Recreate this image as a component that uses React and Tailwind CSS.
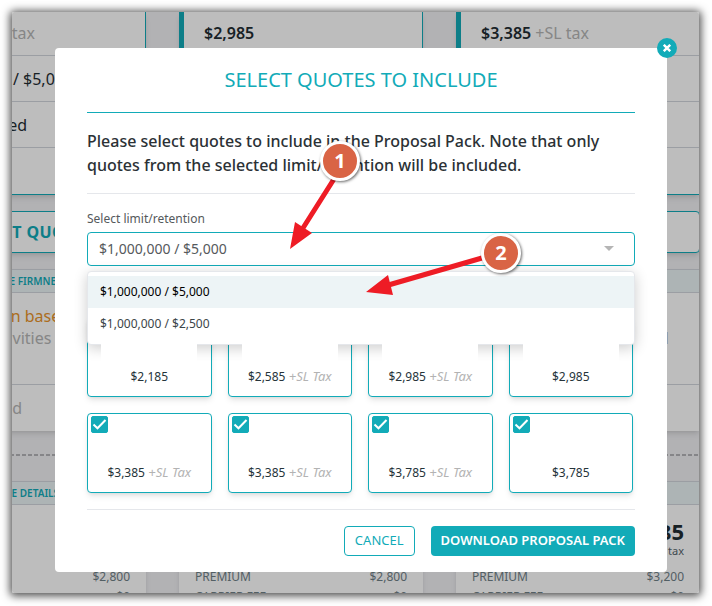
import { useState } from "react";

const LIMITS = ["$1,000,000 / $5,000", "$1,000,000 / $2,500"];

const QUOTES = [
  { id: 1, price: "$2,185" },
  { id: 2, price: "$2,585", tax: true },
  { id: 3, price: "$2,985", tax: true },
  { id: 4, price: "$2,985" },
  { id: 5, price: "$3,385", tax: true },
  { id: 6, price: "$3,385", tax: true },
  { id: 7, price: "$3,785", tax: true },
  { id: 8, price: "$3,785" },
];

const COLUMNS = [
  { price: "$2,585", tax: true, limit: "$1,000,000 / $5,000", status: "Not admitted", premium: "$2,800" },
  { price: "$2,985", tax: false, limit: "$1,000,000 / $5,000", status: "Not admitted", premium: "$2,800" },
  { price: "$3,385", tax: true, limit: "$1,000,000 / $5,000", status: "Not admitted", premium: "$3,200" },
];

function CarrierColumn({ price, tax, limit, status }) {
  return (
    <section className="min-w-0">
      <div className="border-r border-b border-l-5 border-[#12abb8] bg-white text-base text-[#1f2d33] shadow-md">
        <div className="flex h-11 items-center gap-1 border-b border-gray-300 pb-0.5 pl-5">
          <strong className="font-semibold">{price}</strong>
          {tax && <span className="text-[#b5b5b5]">+SL tax</span>}
        </div>
        <div className="flex h-[46px] items-center border-b border-gray-300 pl-5">{limit}</div>
        <div className="flex h-[46px] items-center border-b border-gray-300 pl-5">{status}</div>
        <div className="h-[46px]" />
      </div>
      <button
        type="button"
        className="mt-4 h-[42px] w-full rounded border border-[#12abb8] bg-white text-base font-bold tracking-wide text-[#12abb8] shadow-md"
      >
        SELECT QUOTE
      </button>
      <div className="mt-4 bg-white text-center shadow-md">
        <h3 className="flex h-6 items-center justify-center border-y border-gray-300 bg-[#eaf3f5] text-[10px] font-semibold text-[#12abb8]">
          QUOTE FIRMNESS
        </h3>
        <p className="h-[92px] border-b border-gray-300 pt-3 text-base leading-[22px] text-[#b5b5b5]">
          <span className="block pr-2.5 text-[#e8932a]">Quotation based on</span>
          <span className="block whitespace-nowrap">all subjectivities covered</span>
        </p>
        <div className="flex h-[46px] items-center pl-5 text-base text-[#b5b5b5]">{status}</div>
      </div>
    </section>
  );
}

function PriceColumn({ price, premium }) {
  return (
    <section className="min-w-0 bg-white text-[#6f8087] shadow-md">
      <h3 className="flex h-6 items-center justify-center border-y border-gray-300 bg-[#eaf3f5] text-[10px] font-semibold text-[#12abb8]">
        PRICE DETAILS
      </h3>
      <div className="px-4 pt-2.5">
        <p className="text-right text-[22px] leading-8 font-bold text-[#1f2d33]">{price}</p>
        <p className="text-right text-[11px] leading-2 text-[#55646b]">+SL tax</p>
        <dl className="mt-3 text-xs leading-5">
          <div className="flex justify-between">
            <dt>PREMIUM</dt>
            <dd>{premium}</dd>
          </div>
          <div className="flex justify-between">
            <dt>CARRIER FEE</dt>
            <dd>$0</dd>
          </div>
        </dl>
      </div>
    </section>
  );
}

function QuoteCard({ price, tax, checked, onChange }) {
  return (
    <label className="relative flex h-20 flex-col items-center rounded border border-[#12abb8] bg-white text-xs text-[#26343a] shadow-md">
      <input
        type="checkbox"
        checked={checked}
        onChange={onChange}
        className="peer absolute top-0.5 left-[3px] size-[17px] appearance-none rounded-xs border border-[#12abb8] checked:bg-[#12abb8]"
      />
      <svg
        viewBox="0 0 17 17"
        className="pointer-events-none invisible absolute top-0.5 left-[3px] size-[17px] peer-checked:visible"
        fill="none"
        stroke="#fff"
        strokeWidth="2"
      >
        <path d="M2.5 8.5 6.5 12.3 14.5 4" />
      </svg>
      <span className="z-20 mt-[26px] h-5 w-24 bg-white" />
      <span className="mt-[3px] leading-5">
        {price}
        {tax && <em className="text-[13px] leading-none text-[#b3b3b3]"> +SL Tax</em>}
      </span>
    </label>
  );
}

function Marker({ children, className }) {
  return (
    <span
      className={`absolute flex size-10 items-center justify-center rounded-full border-3 border-white bg-[#d96445] text-xl font-bold text-white shadow-[1px_1px_3px_rgba(0,0,0,0.6)] ${className}`}
    >
      {children}
    </span>
  );
}

export default function App() {
  const [limit, setLimit] = useState(LIMITS[0]);
  const [selected, setSelected] = useState(QUOTES.map((q) => q.id));

  const toggle = (id) =>
    setSelected((ids) => (ids.includes(id) ? ids.filter((i) => i !== id) : [...ids, id]));

  return (
    <div className="flex h-screen bg-white pt-3 pr-[13px] pb-[13px] pl-3 font-['Noto_Sans','Open_Sans',sans-serif]">
      <main className="relative min-w-0 flex-1 overflow-hidden rounded-xs bg-[#f0f0f3] shadow-[0_1px_9px_2px_rgba(0,0,0,0.7)]">
        <div className="-mr-px -ml-[110px]">
          <div className="grid grid-cols-3 gap-[33px]">
            {COLUMNS.map((column, i) => (
              <CarrierColumn key={i} {...column} />
            ))}
          </div>
          <hr className="mt-[23px] h-0.5 border-0 bg-[repeating-linear-gradient(90deg,#b4b4b8_0_4px,transparent_4px_6px)]" />
          <div className="mt-[25px] grid grid-cols-3 gap-[33px]">
            {COLUMNS.map((column, i) => (
              <PriceColumn key={i} {...column} />
            ))}
          </div>
        </div>

        <div className="absolute inset-0 flex items-start bg-black/26 pt-9 pr-8 pl-[43px]">
          <div role="dialog" aria-labelledby="dialog-title" className="relative w-full rounded bg-white px-8 pb-4">
            <button
              type="button"
              aria-label="Close"
              className="absolute -top-2.5 -right-2.5 flex size-5 items-center justify-center rounded-full bg-[#12abb8]"
            >
              <svg viewBox="0 0 8 8" className="size-2" stroke="#fff" strokeWidth="2.4">
                <path d="m.8.8 6.4 6.4M7.2.8.8 7.2" />
              </svg>
            </button>

            <h2 id="dialog-title" className="border-b border-[#12abb8] py-4 text-center text-xl leading-8 text-[#12abb8]">
              SELECT QUOTES TO INCLUDE
            </h2>
            <p className="border-b border-gray-200 py-4 text-base leading-6 font-medium text-[#2b3135]">
              Please select quotes to include in the Proposal Pack. Note that only quotes from the selected
              limit/retention will be included.
            </p>

            <div className="relative mt-4">
              <label htmlFor="limit" className="block text-xs leading-[18px] text-[#55595c]">
                Select limit/retention
              </label>
              <select
                id="limit"
                value={limit}
                onChange={(e) => setLimit(e.target.value)}
                className="mt-1 block h-[34px] w-full appearance-none rounded border border-[#12abb8] bg-white px-[11px] text-sm text-[#55595c]"
              >
                {LIMITS.map((l) => (
                  <option key={l}>{l}</option>
                ))}
              </select>
              <svg viewBox="0 0 10 5" className="pointer-events-none absolute right-[21px] bottom-[15px] h-[5px] w-2.5" fill="#b5b5b5">
                <path d="M0 0h10L5 5z" />
              </svg>
              <ul
                role="listbox"
                aria-label="Limit/retention"
                className="absolute inset-x-0 top-full z-10 mt-[5px] rounded border border-gray-200 bg-white py-1 text-xs shadow-[0_3px_14px_rgba(0,0,0,0.2)]"
              >
                {LIMITS.map((l) => (
                  <li
                    key={l}
                    role="option"
                    aria-selected={l === limit}
                    onClick={() => setLimit(l)}
                    className="flex h-8 items-center px-3 text-[#3c4549] aria-selected:bg-[#edf4f6] aria-selected:text-black"
                  >
                    {l}
                  </li>
                ))}
              </ul>
            </div>

            <div className="mt-[51px] grid grid-cols-4 gap-4 border-b border-gray-200 pr-0.5 pb-4">
              {QUOTES.map((q) => (
                <QuoteCard key={q.id} {...q} checked={selected.includes(q.id)} onChange={() => toggle(q.id)} />
              ))}
            </div>

            <div className="flex justify-end gap-4 pt-4 text-[13px]">
              <button type="button" className="h-[30px] rounded border border-[#12abb8] px-2.5 text-[#12abb8]">
                CANCEL
              </button>
              <button type="button" className="h-[30px] rounded bg-[#12abb8] px-2.5 font-semibold text-white">
                DOWNLOAD PROPOSAL PACK
              </button>
            </div>

            <svg
              viewBox="0 0 300 160"
              className="pointer-events-none absolute top-[112px] left-[205px] z-30 h-[160px] w-[300px]"
              fill="#ee1c25"
              stroke="#ee1c25"
            >
              <path strokeWidth="5" d="M74 19 43 68M222 98 125 126" />
              <path stroke="none" d="M30 89 35 62 52 73zM106 132 128 115 133 135z" />
            </svg>
            <Marker className="top-[93px] left-[265px] z-30">1</Marker>
            <Marker className="top-[185px] left-[426px] z-30">2</Marker>
          </div>
        </div>
      </main>
    </div>
  );
}
